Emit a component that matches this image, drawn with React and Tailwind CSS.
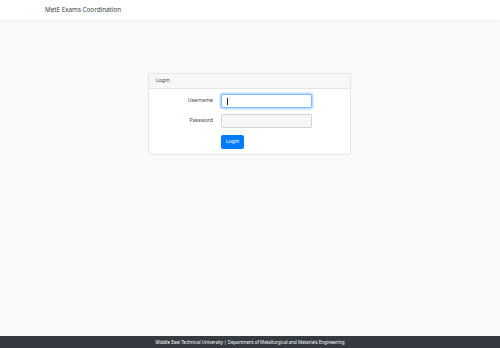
import React from 'react';

const App = () => {
  return (
    <div className="w-[500px] h-[348px] flex flex-col bg-[#f8fafc] text-[#3a3f44]" style={{ fontFamily: '"Noto Sans", Lato, sans-serif' }}>
      {/* Navbar */}
      <nav className="h-[20px] shrink-0 bg-white shadow-[0_1px_2px_rgba(0,0,0,0.06)] flex items-center pl-[45px]">
        <span className="text-[6.3px] leading-none text-[#3a3f44]">MetE Exams Coordination</span>
      </nav>

      {/* Main */}
      <main className="flex-1 pt-[53px]">
        <div className="ml-[148px] w-[203px] bg-white border border-[#e6e6e6] rounded-[2px]">
          <div className="h-[15px] bg-[#f7f7f7] border-b border-[#e6e6e6] flex items-center px-[7px] text-[5.2px] leading-none">
            Login
          </div>
          <div className="pt-[5px] pb-[5px] flex flex-col gap-[6px]">
            <div className="flex items-center">
              <label className="w-[64px] text-right text-[5.2px] leading-none">Username</label>
              <div className="ml-[8px] w-[91px] h-[14px] rounded-[2px] border border-[#80bdff] shadow-[0_0_0_1.5px_rgba(0,123,255,0.25)] bg-white flex items-center pl-[5px]">
                <span className="w-[0.7px] h-[7px] bg-[#222]" />
              </div>
            </div>
            <div className="flex items-center">
              <label className="w-[64px] text-right text-[5.2px] leading-none">Password</label>
              <div className="ml-[8px] w-[91px] h-[14px] rounded-[2px] border border-[#ced4da] bg-[#f4f6f8]" />
            </div>
            <div className="flex items-center">
              <div className="w-[64px]" />
              <button className="ml-[8px] mt-[0.5px] h-[14px] w-[23px] rounded-[2px] bg-[#007bff] text-white text-[5.2px] leading-none">
                Login
              </button>
            </div>
          </div>
        </div>
      </main>

      {/* Footer */}
      <footer className="h-[12px] shrink-0 bg-[#343a40] flex items-center justify-center">
        <span className="text-[4.5px] leading-none text-white">
          Middle East Technical University | Department of Metallurgical and Materials Engineering
        </span>
      </footer>
    </div>
  );
};

export default App;
